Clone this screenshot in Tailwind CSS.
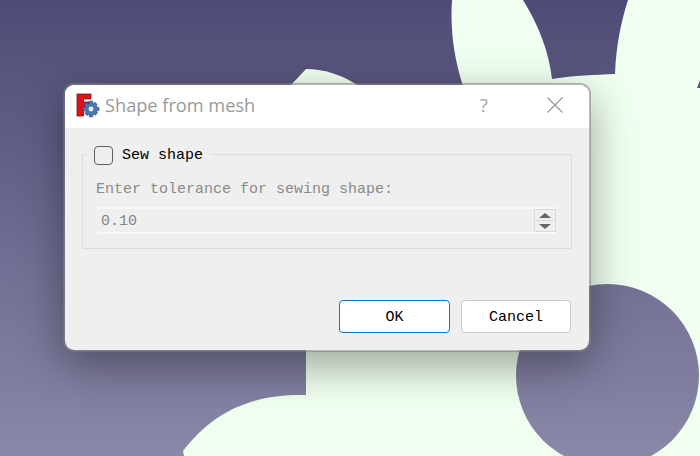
<!DOCTYPE html>
<html lang="en">
<head>
  <meta charset="UTF-8" />
  <title>Shape from mesh</title>
  <script src="https://cdn.jsdelivr.net/npm/@tailwindcss/browser@4"></script>
</head>
<body class="relative w-[700px] h-[456px] overflow-hidden bg-[#4e4b76]">
  <!-- desktop wallpaper -->
  <svg class="absolute inset-0" width="700" height="456" viewBox="0 0 700 456">
    <defs>
      <linearGradient id="bg" gradientUnits="userSpaceOnUse" x1="0" y1="0" x2="0" y2="456">
        <stop offset="0" stop-color="#4e4b76" />
        <stop offset="1" stop-color="#8a88a8" />
      </linearGradient>
    </defs>
    <rect width="700" height="456" fill="url(#bg)" />
    <path d="M452 0 C450 30 454 58 463 86 L290 86 L306 69 C325 69 343 75 362 88 L306 200 L306 395 C250 394 213 412 183 451 L184 456 L700 456 L700 0 Z" fill="#f0fff0" />
    <path d="M523 0 C539 26 549 52 552 79 C575 75 595 75 615 74 C616 46 621 22 628 0 Z" fill="url(#bg)" />
    <circle cx="607.5" cy="375.5" r="91.5" fill="url(#bg)" />
    <path d="M697 88 L700 80 L700 88 Z" fill="url(#bg)" />
  </svg>

  <!-- dialog window -->
  <div class="absolute left-[63px] top-[83px] w-[528px] h-[269px] rounded-[11px] border-2 border-[rgba(125,125,125,0.53)] bg-[#efefef] bg-clip-padding shadow-[0_14px_44px_rgba(0,0,0,0.36)]">
    <div class="flex h-full flex-col overflow-hidden rounded-[9px]">
      <div class="flex h-[43px] shrink-0 items-center bg-white pb-[3px] pl-[11px]">
        <svg width="26" height="26" viewBox="0 0 26 26">
          <path d="M1 2 H15 V7 H7.5 V10 H13 V14.5 H7.5 V24 H1 Z" fill="#d8141c" stroke="#7d1014" stroke-width="0.8" />
          <g transform="translate(15 17)">
            <path d="M-1.5 -8 H1.5 L2 -5.6 L4 -6.8 L6.2 -4.6 L5 -2.6 L8 -1.5 V1.5 L5.4 2 L6.6 4 L4.4 6.2 L2.4 5 L1.5 8 H-1.5 L-2 5.4 L-4 6.6 L-6.2 4.4 L-5 2.4 L-8 1.5 V-1.5 L-5.4 -2 L-6.6 -4 L-4.4 -6.2 L-2.4 -5 Z" fill="#4a78b0" stroke="#27476f" stroke-width="0.5" />
            <circle r="2.4" fill="#e8eef5" />
          </g>
        </svg>
        <span class="ml-[3px] font-['Open_Sans',sans-serif] text-[18.2px] leading-none text-[#9a9a9a]">Shape from mesh</span>
        <span class="ml-auto font-['Open_Sans',sans-serif] text-[19px] leading-none text-[#a8a8a8]">?</span>
        <button class="ml-[59px] mr-[26px]">
          <svg class="block" width="16" height="16" viewBox="0 0 16 16">
            <path d="M0.5 0.5 L15.5 15.5 M15.5 0.5 L0.5 15.5" stroke="#999999" stroke-width="1.3" fill="none" />
          </svg>
        </button>
      </div>

      <div class="flex flex-1 flex-col px-[17px] pt-[26px] font-['Liberation_Mono',monospace] text-[15px]">
        <div class="relative h-[95px] border border-[#dcdcdc] px-[14px] pt-[25px]">
          <label class="absolute left-[4px] top-[-10px] flex h-[20px] items-center gap-[9px] bg-[#efefef] px-[7px] text-black">
            <span class="size-[19px] rounded-[4px] border border-[#606060] bg-[#efefef]"></span>
            <span class="pt-[2px]">Sew shape</span>
          </label>
          <p class="-ml-[1px] leading-[20px] text-[#8a8a8a]">Enter tolerance for sewing shape:</p>
          <div class="mt-[7px] flex h-[27px] items-center justify-between border-y-2 border-y-[#f8f8f8] pl-[4px] pr-[1px] text-[#858585]">
            <span class="pt-[3px]">0.10</span>
            <div class="flex w-[22px] flex-col border border-[#d9d9d9]">
              <span class="flex h-[11px] items-center justify-center border-b border-[#d9d9d9]">
                <span class="size-0 border-x-[6px] border-b-[5px] border-x-transparent border-b-[#666666]"></span>
              </span>
              <span class="flex h-[10px] items-center justify-center">
                <span class="size-0 border-x-[6px] border-t-[5px] border-x-transparent border-t-[#666666]"></span>
              </span>
            </div>
          </div>
        </div>

        <div class="mt-[51px] flex justify-end gap-[11px] text-black">
          <button class="h-[33px] w-[111px] rounded-[4px] border border-[#0078d4] bg-white pt-[3px]">OK</button>
          <button class="mr-[1px] h-[33px] w-[110px] rounded-[4px] border border-[#cccccc] bg-white pt-[3px]">Cancel</button>
        </div>
      </div>
    </div>
  </div>
</body>
</html>
